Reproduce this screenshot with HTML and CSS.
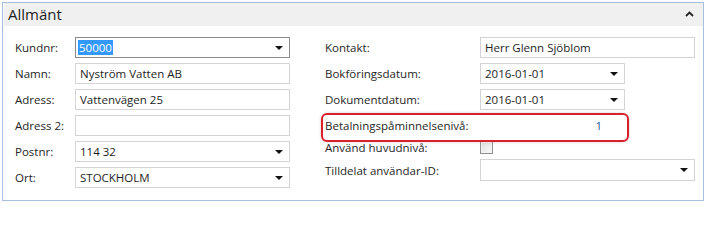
FILE: index.html
```html
<!DOCTYPE html>
<html lang="sv">
<head>
<meta charset="utf-8">
<title>Allmänt</title>
<link rel="stylesheet" href="styles.css">
</head>
<body>
<div class="panel">
  <div class="header">
    <span class="title">Allmänt</span>
    <svg class="collapse" width="9" height="6" viewBox="0 0 9 6"><path d="M1 5 L4.5 1.5 L8 5" fill="none" stroke="#222" stroke-width="1.8"/></svg>
  </div>
  <div class="body">
    <div class="col col-left">
      <div class="row"><span class="label">Kundnr:</span><div class="field active"><span class="selected">50000</span><i class="arrow"></i></div></div>
      <div class="row"><span class="label">Namn:</span><div class="field">Nyström Vatten AB</div></div>
      <div class="row"><span class="label">Adress:</span><div class="field">Vattenvägen 25</div></div>
      <div class="row"><span class="label">Adress 2:</span><div class="field"></div></div>
      <div class="row"><span class="label">Postnr:</span><div class="field">114 32<i class="arrow"></i></div></div>
      <div class="row"><span class="label">Ort:</span><div class="field">STOCKHOLM<i class="arrow"></i></div></div>
    </div>
    <div class="col col-right">
      <div class="row"><span class="label">Kontakt:</span><div class="field">Herr Glenn Sjöblom</div></div>
      <div class="row"><span class="label">Bokföringsdatum:</span><div class="field date">2016-01-01<i class="arrow"></i></div></div>
      <div class="row"><span class="label">Dokumentdatum:</span><div class="field date">2016-01-01<i class="arrow"></i></div></div>
      <div class="row"><span class="label">Betalningspåminnelsenivå:</span><div class="value">1</div></div>
      <div class="row short"><span class="label">Använd huvudnivå:</span><span class="checkbox"></span></div>
      <div class="row short last"><span class="label">Tilldelat användar-ID:</span><div class="field tall"><i class="arrow"></i></div></div>
    </div>
  </div>
  <div class="highlight"></div>
</div>
</body>
</html>
```
FILE: styles.css
```css
* { box-sizing: border-box; }
html, body { margin: 0; padding: 0; background: #ffffff; }
body {
  font-family: "Open Sans", "Noto Sans", "Liberation Sans", sans-serif;
  font-size: 11.5px;
  color: #262626;
}
.panel {
  position: relative;
  margin: 2px 0 0 2px;
  width: 702px;
  height: 199px;
  border: 1px solid #a7bfdb;
  background: #ffffff;
}
.header {
  height: 23px;
  background: #f0f0f0;
  border-left: 1px solid #ffffff;
  display: flex;
  align-items: center;
  justify-content: space-between;
  padding: 0 9px 0 4px;
}
.title {
  font-size: 15px;
  color: #1e1e1e;
  line-height: 1;
  margin-top: -1px;
}
.collapse { display: block; margin-top: -2px; }
.body {
  display: flex;
  padding: 11px 0 0 12px;
}
.col { display: flex; flex-direction: column; }
.col-left { width: 310px; }
.row {
  display: flex;
  align-items: center;
  height: 21px;
  margin-bottom: 5px;
}
.row.short { margin-top: -4px; margin-bottom: 1px; }
.row.short + .row.short { margin-top: 0; }
.row.last { height: 22px; }
.col-left .label { width: 60px; }
.col-right .label { width: 155px; }
.label { color: #262626; white-space: nowrap; }
.field {
  position: relative;
  width: 215px;
  height: 21px;
  border: 1px solid #d4d4d4;
  padding: 0 4px;
  display: flex;
  align-items: center;
  color: #1e1e1e;
  white-space: nowrap;
}
.field.tall { height: 22px; }
.field.active { border-color: #8a8a8a; padding-left: 2px; }
.field.date { width: 145px; }
.selected {
  background: #3399ff;
  color: #ffffff;
  padding: 0 1px;
  line-height: 15px;
}
.arrow {
  position: absolute;
  right: 6px;
  top: 8px;
  width: 0;
  height: 0;
  border-left: 4px solid transparent;
  border-right: 4px solid transparent;
  border-top: 4px solid #111;
}
.field.tall .arrow { top: 8px; }
.value {
  width: 122px;
  text-align: right;
  color: #1f5c99;
}
.checkbox {
  width: 13px;
  height: 13px;
  border: 1px solid #8e8f8f;
  background: linear-gradient(135deg, #dcdcdc, #fbfbfb);
  box-shadow: inset 0 0 0 1px #f4f4f4;
}
.highlight {
  position: absolute;
  left: 318px;
  top: 110px;
  width: 308px;
  height: 29px;
  border: 2px solid #d9202b;
  border-radius: 6px;
  box-shadow: 0 0 3px rgba(120, 120, 120, 0.35);
}
```
